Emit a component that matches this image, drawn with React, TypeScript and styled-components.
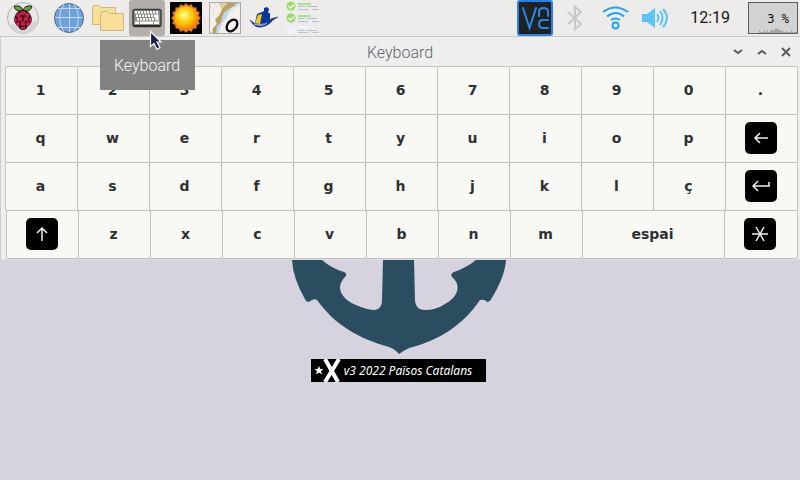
import React from "react";
import styled, { createGlobalStyle } from "styled-components";

const GlobalStyle = createGlobalStyle`
  * { box-sizing: border-box; }
  html, body, #root { height: 100%; }
  body { margin: 0; background: #d6d3de; font-family: Roboto, sans-serif; overflow: hidden; }
  button { font: inherit; padding: 0; margin: 0; border: 0; background: none; }
`;

const Desktop = styled.div`
  min-height: 100%;
  display: flex;
  flex-direction: column;
`;

const Panel = styled.header`
  height: 37px;
  display: flex;
  justify-content: space-between;
  background: #edecea;
  border-bottom: 1px solid #cbcaca;
`;

const Launchers = styled.nav`
  display: flex;
  gap: 3px;
  padding-left: 5px;
`;

const Tray = styled.div`
  display: flex;
  align-items: center;
  gap: 4px;
  padding-right: 2px;
`;

const PanelButton = styled.button<{ $active?: boolean; $menu?: boolean }>`
  position: relative;
  width: 36px;
  height: 36px;
  display: grid;
  place-items: center;
  border-radius: 3px;
  margin-right: ${(p) => (p.$menu ? 7 : 0)}px;
  background: ${(p) => (p.$active ? "#b5afab" : "transparent")};
  svg { display: block; }
`;

const Tooltip = styled.span`
  position: absolute;
  z-index: 2;
  top: 40px;
  left: -29px;
  min-width: 95px;
  height: 50px;
  padding: 0 14px 0 13px;
  background: #828282;
  color: #f4f7f9;
  font-size: 16px;
  font-weight: 300;
  line-height: 52px;
  white-space: nowrap;
`;

const Pointer = styled.svg`
  position: absolute;
  z-index: 3;
  top: 30px;
  left: 20px;
`;

const Clock = styled.time`
  margin: 0 14px 0 13px;
  font-size: 16px;
  line-height: 38px;
  color: #161616;
`;

const CpuMeter = styled.div`
  position: relative;
  width: 50px;
  height: 32px;
  border: 1px solid #5b5b5b;
  background: #d2d2d2;
  color: #111;
  font: 12px/32px "DejaVu Sans Mono", monospace;
  text-align: right;
  padding-right: 8px;
  white-space: pre;
`;

const CpuGraph = styled.svg`
  position: absolute;
  right: 0;
  bottom: 0;
`;

const Window = styled.main`
  background: #eeeeee;
  border-left: 1px solid #cdccd2;
  border-bottom: 1px solid #dddce0;
  padding: 0 3px 1px 4px;
`;

const TitleBar = styled.div`
  height: 29px;
  margin: 0 -1px 0 -3px;
  padding-top: 1px;
  display: grid;
  grid-template-columns: 1fr auto 1fr;
  align-items: center;
`;

const Title = styled.h1`
  grid-column: 2;
  margin: 0;
  padding-top: 2px;
  font-size: 16px;
  font-weight: 300;
  line-height: 26px;
  color: #62666e;
`;

const WindowButtons = styled.div`
  display: flex;
  justify-content: flex-end;
`;

const WindowButton = styled.button`
  width: 24px;
  height: 24px;
  display: grid;
  place-items: center;
`;

const KeyRow = styled.div<{ $shifted?: boolean }>`
  height: 48px;
  display: flex;
  padding-left: ${(p) => (p.$shifted ? 1 : 0)}px;
`;

const Key = styled.button<{ $width?: number }>`
  flex: ${(p) => p.$width ?? 73} 1 ${(p) => p.$width ?? 73}px;
  min-width: 0;
  height: 49px;
  margin-right: -1px;
  padding: 0 2px 2px 0;
  display: grid;
  place-items: center;
  border: 1px solid #c0c1c0;
  border-radius: 2px;
  background: #f8f9f4;
  color: #2e3032;
  font: bold 14px/20px "DejaVu Sans", sans-serif;
`;

const KeyCap = styled.span`
  width: 32px;
  height: 32px;
  display: grid;
  place-items: center;
  border-radius: 5px;
  background: #000;
`;

const Wallpaper = styled.section`
  flex: 1;
  display: flex;
  flex-direction: column;
  align-items: center;
  gap: 5px;
  padding-right: 3px;
`;

const Banner = styled.div`
  height: 23px;
  display: flex;
  align-items: center;
  gap: 2px;
  padding: 0 14px 0 1px;
  background: #000;
  color: #fff;
  font: italic 12px/22px "Noto Sans", sans-serif;
  white-space: nowrap;
`;

const Raspberry = () => (
  <svg width="34" height="34" viewBox="0 0 34 34">
    <circle cx="17" cy="17" r="15.5" fill="#e8e8e8" stroke="#b3b3b6" />
    <path d="M3 23A15 15 0 0 0 32 19Q20 27 3 23Z" fill="#d3d4d5" />
    <path d="M17 10Q8 11 8.500 5Q16 4 17 10ZM17 10Q26 11 25.500 5Q18 4 17 10Z" fill="#62a53e" stroke="#202b12" strokeWidth="1" />
    <path d="M17 9C13 9 10 12 9 15C7 19 9 23 12 25C14 29 16 29 17 29C18 29 20 29 22 25C25 23 27 19 25 15C24 12 21 9 17 9Z" fill="#260812" />
    <g fill="#c51c48">
      <ellipse cx="17" cy="12" rx="3" ry="2" />
      <ellipse cx="12.500" cy="14" rx="2.500" ry="2" transform="rotate(-35 12.500 14)" />
      <ellipse cx="21.500" cy="14" rx="2.500" ry="2" transform="rotate(35 21.500 14)" />
      <circle cx="14" cy="18" r="2.500" /><circle cx="20" cy="18" r="2.500" />
      <ellipse cx="9.500" cy="19" rx="1.300" ry="2.500" /><ellipse cx="24.500" cy="19" rx="1.300" ry="2.500" />
      <circle cx="17" cy="22.500" r="2.500" />
      <ellipse cx="12" cy="23" rx="1.800" ry="2.300" transform="rotate(-25 12 23)" />
      <ellipse cx="22" cy="23" rx="1.800" ry="2.300" transform="rotate(25 22 23)" />
      <ellipse cx="17" cy="27" rx="2.500" ry="1.300" />
    </g>
  </svg>
);

const Globe = () => (
  <svg width="32" height="32" viewBox="0 0 32 32">
    <circle cx="16" cy="16" r="14.500" fill="#6fa1dc" stroke="#4e6484" />
    <g fill="none" stroke="#c3dcf5" strokeWidth="1">
      <path d="M16.500 2V30M2 15.500H30M5 6.500H27M5 25.500H27" />
      <path d="M11 2Q2 16 11 30M21 2Q30 16 21 30" />
    </g>
  </svg>
);

const Folders = () => (
  <svg width="34" height="30" viewBox="0 0 34 30" fill="#f6df98" stroke="#d1b77d">
    <path d="M1.500 21.500V3.500L3 2.500H8.500L10 4.500H24.500V21.500Z" />
    <path d="M9.500 27.500V10.500L11 8.500H16.500L18.500 10.500H32.500V27.500Z" />
  </svg>
);

const KeyboardIcon = () => (
  <svg width="30" height="20" viewBox="0 0 30 20">
    <rect x="1" y="1.500" width="28" height="17" rx="2" fill="#8b8c86" stroke="#3b3d38" strokeWidth="1.500" />
    <path d="M2 18H28" stroke="#292b27" strokeWidth="2" />
    <g fill="#fff">
      {[3, 6, 9, 12, 15, 18, 21, 24].map((x) => <rect key={x} x={x} y="3" width="2" height="2.500" />)}
      {[4, 7, 10, 13, 16, 19].map((x) => <rect key={x} x={x} y="6.500" width="2" height="2.500" />)}
      {[5, 8, 11, 14, 17, 20].map((x) => <rect key={x} x={x} y="10" width="2" height="2.500" />)}
      <path d="M22 6.500H26.500V12.500H23.500V9.500H22ZM3 13.500H7V16H3ZM8 13.500H21V16H8ZM22 13.500H27V16H22Z" />
    </g>
  </svg>
);

const Sun = () => (
  <svg width="32" height="32" viewBox="0 0 32 32">
    <defs>
      <radialGradient id="sun" cx=".42" cy=".38" r=".62">
        <stop offset="0" stopColor="#fffdd5" /><stop offset=".3" stopColor="#ffe52c" />
        <stop offset=".7" stopColor="#ffb400" /><stop offset="1" stopColor="#f08000" />
      </radialGradient>
    </defs>
    <path fill="#000" d="M0 0H32V32H0Z" />
    <path fill="#f08618" stroke="#d9641a" strokeWidth=".7" d={Array.from({ length: 32 }, (_, i) => {
      const r = i % 2 ? 12.5 : 14.5;
      const a = (i * Math.PI) / 16;
      return `${i ? "L" : "M"}${(16 + r * Math.cos(a)).toFixed(2)} ${(16 + r * Math.sin(a)).toFixed(2)}`;
    }).join("") + "Z"} />
    <circle cx="16" cy="16" r="11.500" fill="url(#sun)" />
  </svg>
);

const Chart = () => (
  <svg width="32" height="32" viewBox="0 0 32 32">
    <path fill="#f3f0ee" d="M0 0H32V32H0Z" />
    <path d="M32 2L25 6L20 10L17 17L13 21L9 32H5L8 24L11 14L17 9L24 6L30 0H32Z" fill="#b9d6f3" />
    <path d="M9 0H29Q26 4 22 6L17 9Q13 12 13 17Q12 22 8 24L7 32H3L4 26L8 22L6 18L11 12L13 7Z" fill="#b9a25f" />
    <path d="M9 0H20L14 6L13 8Z" fill="#ddcf9c" />
    <path d="M1 4L5 8L3 13M5 1L9 5" fill="none" stroke="#e4d3cd" />
    <ellipse cx="23" cy="23.500" rx="4.500" ry="6.500" transform="rotate(38 23 23.500)" fill="none" stroke="#090909" strokeWidth="2.300" />
    <rect x=".5" y=".5" width="31" height="31" fill="none" stroke="#aaa9a5" />
  </svg>
);

const Boat = () => (
  <svg width="30" height="24" viewBox="0 0 30 24">
    <path d="M8 8L13 6L15 5L15 2L18 1L20 3L19 7H21L21 14Q14 20 6 17Z" fill="#0b3799" />
    <path d="M9 9L13 8L11 18L6 17Z" fill="#f6c914" />
    <path d="M1 14Q5 18 11 19Q16 18 19 15Q22 12 29 11Q23 14 20 18Q15 22 9 21Q4 20 1 14Z" fill="#0b3799" stroke="#0b3799" strokeWidth=".5" />
    <path d="M5 18Q13 21 18 17" fill="none" stroke="#edecea" strokeWidth=".8" />
  </svg>
);

const Checklist = () => (
  <svg width="34" height="36" viewBox="0 0 34 36">
    {[6, 18].map((y) => (
      <g key={y}>
        <circle cx="5" cy={y} r="4.500" fill="#94df65" />
        <path d={`M2.500 ${y}l2 2l3.500-3.500`} fill="none" stroke="#fff" strokeWidth="1.500" />
        <path d={`M12 ${y - 2}H25`} stroke="#a0ec73" strokeWidth="2" />
        <path d={`M12 ${y + 0.5}H19M21 ${y + 0.5}H31M12 ${y + 3.5}H22M26 ${y + 3.5}H33`} stroke="#b3bed6" />
      </g>
    ))}
    <circle cx="5" cy="29.500" r="4.500" fill="#edf1fb" />
    <path d="M12 27H24" stroke="#f7f7fa" strokeWidth="2" />
    <path d="M12 30.500H19M21 30.500H31M12 32.500H22M26 32.500H33" stroke="#b9c3d8" />
  </svg>
);

const Vnc = () => (
  <svg width="36" height="36" viewBox="0 0 36 36">
    <rect x="1" y="1" width="34" height="34" rx="2" fill="#202123" stroke="#2480ea" strokeWidth="2" />
    <g fill="none" stroke="#2a85e8" strokeWidth="2" strokeLinecap="round">
      <path d="M6 8L12.500 28L19 8M22 16V12Q22 8 26.500 8Q31 8 31 12V16" />
      <path d="M31 20H26Q22 20 22 24Q22 28 26 28H31" />
    </g>
  </svg>
);

const Bluetooth = () => (
  <svg width="16" height="28" viewBox="0 0 16 28" fill="none" stroke="#c8c8c8" strokeWidth="2">
    <path d="M1 8L14 20L8 25V3L14 8L1 20" />
  </svg>
);

const Wifi = () => (
  <svg width="28" height="26" viewBox="-1 0 28 26" fill="none" stroke="#1fa4f2" strokeWidth="2">
    <path d="M1 7Q13-2 26 7M5 11.500Q14 4.500 22 11.500M9 15Q13.500 12 18 15" />
    <circle cx="13.500" cy="20.500" r="3" />
  </svg>
);

const Speaker = () => (
  <svg width="28" height="22" viewBox="-1 0 28 22">
    <path d="M0 7H5L13 1V21L5 15H0Z" fill="#5cc4fa" />
    <path d="M15 7Q18 11 15 15M18 4Q23 11 18 18M21 2Q29 11 21 20" fill="none" stroke="#5cc4fa" strokeWidth="2" />
  </svg>
);

const chromePaths = { minimize: "M1 3L5 6L9 3", maximize: "M1 7L5 4L9 7", close: "M1 1L9 9M9 1L1 9" };

const keyIcons: Record<string, React.ReactNode> = {
  Backspace: <path d="M16 8H3M8 3L3 8L8 13" />,
  Enter: <path d="M17 4V8H1M6 3L1 8L6 13" />,
  Shift: <path d="M9 15V2M4 7L9 2L14 7" />,
  Symbols: <path d="M1 8H17M5 1L13 15M13 1L5 15" />,
};

const rows: string[][] = [
  ["1", "2", "3", "4", "5", "6", "7", "8", "9", "0", "."],
  ["q", "w", "e", "r", "t", "y", "u", "i", "o", "p", "Backspace"],
  ["a", "s", "d", "f", "g", "h", "j", "k", "l", "ç", "Enter"],
  ["Shift", "z", "x", "c", "v", "b", "n", "m", "espai", "Symbols"],
];
const keyWidths: Record<string, number> = { espai: 143, Symbols: 74 };

export default function App() {
  return (
    <Desktop>
      <GlobalStyle />
      <Panel>
        <Launchers>
          <PanelButton $menu aria-label="Menu"><Raspberry /></PanelButton>
          <PanelButton aria-label="Web browser"><Globe /></PanelButton>
          <PanelButton aria-label="File manager"><Folders /></PanelButton>
          <PanelButton $active aria-label="Keyboard">
            <KeyboardIcon />
            <Tooltip role="tooltip">Keyboard</Tooltip>
            <Pointer width="14" height="22" viewBox="0 0 14 22" aria-hidden="true">
              <path d="M1.500 1.500L12 12H8L11 17.500L8 19.500L5 13.500L1.500 16.500Z" fill="#171c44" stroke="#fff" strokeWidth="1.200" />
            </Pointer>
          </PanelButton>
          <PanelButton aria-label="Weather"><Sun /></PanelButton>
          <PanelButton aria-label="Charts"><Chart /></PanelButton>
          <PanelButton aria-label="Sailing"><Boat /></PanelButton>
          <PanelButton aria-label="Checklist"><Checklist /></PanelButton>
        </Launchers>
        <Tray>
          <PanelButton aria-label="VNC"><Vnc /></PanelButton>
          <PanelButton aria-label="Bluetooth"><Bluetooth /></PanelButton>
          <PanelButton aria-label="Network"><Wifi /></PanelButton>
          <PanelButton aria-label="Volume"><Speaker /></PanelButton>
          <Clock>12:19</Clock>
          <CpuMeter>
            3 %
            <CpuGraph width="38" height="5" viewBox="0 0 38 5" aria-hidden="true">
              <path d="M0 5V2H1V4H5V2H6V4H8V2H9V4H11V3H12V1H13V3H14V2H16V0H17V1H18V0H19V2H20V1H21V3H23V2H24V4H27V3H28V4H32V2H33V4H38V5Z" fill="#a5a5a5" />
            </CpuGraph>
          </CpuMeter>
        </Tray>
      </Panel>
      <Window>
        <TitleBar>
          <Title>Keyboard</Title>
          <WindowButtons>
            {Object.entries(chromePaths).map(([name, d]) => (
              <WindowButton key={name} aria-label={name}>
                <svg width="10" height="10" viewBox="0 0 10 10" fill="none" stroke="#5a5a5a" strokeWidth="2"><path d={d} /></svg>
              </WindowButton>
            ))}
          </WindowButtons>
        </TitleBar>
        {rows.map((row, index) => (
          <KeyRow key={index} $shifted={index === 3}>
            {row.map((label) => (
              <Key key={label} $width={keyWidths[label]} aria-label={label}>
                {keyIcons[label] ? (
                  <KeyCap>
                    <svg width="18" height="16" viewBox="0 0 18 16" fill="none" stroke="#f0f0f0" strokeWidth="1.500">{keyIcons[label]}</svg>
                  </KeyCap>
                ) : label}
              </Key>
            ))}
          </KeyRow>
        ))}
      </Window>
      <Wallpaper>
        <svg width="214" height="94" viewBox="0 0 214 94" aria-hidden="true">
          <path fill="#2b4d60" d="M0 0H30Q39 8 52 12Q56 14 53 17C42 28 51 40 64 45Q75 50 83 50Q90 49 90 40L91 0H122L123 41Q124 50 133 50Q144 50 153 44C165 38 170 26 161 18Q157 14 162 12Q174 8 184 0H214Q213 17 198 41L195 42Q193 39 188 40C171 65 148 80 117 88Q111 91 107 94Q103 89 97 87C66 78 43 65 25 40Q21 38 17 42L14 41Q1 19 0 0Z" />
        </svg>
        <Banner>
          <svg width="30" height="23" viewBox="0 0 30 23" aria-hidden="true">
            <path d="M7 7L8.300 10H11.500L9 12L10 15.500L7 13.500L4 15.500L5 12L2.500 10H5.700Z" fill="#fff" />
            <path d="M13 0L26 23M27 0L13 23" stroke="#fff" strokeWidth="4" />
          </svg>
          <span>v3 2022 Països Catalans</span>
        </Banner>
      </Wallpaper>
    </Desktop>
  );
}
